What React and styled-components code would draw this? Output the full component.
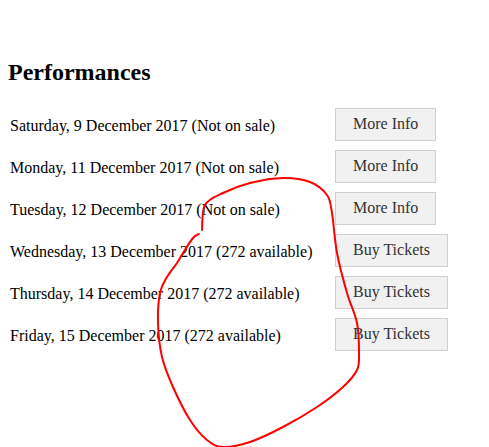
import styled, { createGlobalStyle } from "styled-components";

const GlobalStyle = createGlobalStyle`
  html, body {
    margin: 0;
    padding: 0;
    background: #fff;
  }
  body {
    font-family: "Liberation Serif", "Times New Roman", serif;
    color: #000;
  }
`;

const Page = styled.div`
  position: relative;
  width: 489px;
  height: 447px;
  overflow: hidden;
  padding: 59px 0 0 8px;
  box-sizing: border-box;
`;

const Title = styled.h2`
  margin: 0 0 22px;
  font-size: 24px;
  font-weight: bold;
  line-height: 26.6px;
`;

const List = styled.div`
  display: grid;
  grid-template-columns: 325px auto;
  row-gap: 9px;
  padding-left: 2px;
  justify-content: start;
  align-items: center;
`;

const Label = styled.span`
  font-size: 16px;
  padding-top: 4px;
`;

const Button = styled.button`
  justify-self: start;
  font-family: "Liberation Serif", "Times New Roman", serif;
  font-size: 16px;
  line-height: 18px;
  color: #333;
  background: #f1f1f1;
  border: 1px solid #cfcfcf;
  padding: 6px 17px;
  height: 33px;
  box-sizing: border-box;
  cursor: pointer;
`;

const Scribble = styled.svg`
  position: absolute;
  left: 0;
  top: 0;
  pointer-events: none;
`;

const performances = [
  { date: "Saturday, 9 December 2017", status: "Not on sale", onSale: false },
  { date: "Monday, 11 December 2017", status: "Not on sale", onSale: false },
  { date: "Tuesday, 12 December 2017", status: "Not on sale", onSale: false },
  { date: "Wednesday, 13 December 2017", status: "272 available", onSale: true },
  { date: "Thursday, 14 December 2017", status: "272 available", onSale: true },
  { date: "Friday, 15 December 2017", status: "272 available", onSale: true },
];

const loop = [
  [202, 230], [205, 205], [223, 193], [250, 183], [283, 178], [310, 182],
  [327, 195], [332, 213], [337, 253], [347, 293], [357, 323], [359, 353],
  [357, 370], [343, 387], [317, 407], [283, 427], [250, 442], [223, 447],
  [207, 440], [190, 420], [173, 387], [162, 357], [158, 323], [160, 293],
  [167, 277], [177, 263], [183, 253], [193, 238], [199, 234],
];

// catmull-rom through the points, so the pen line stays smooth
function smoothPath(pts) {
  let d = `M${pts[0][0]},${pts[0][1]}`;
  for (let i = 0; i < pts.length - 1; i++) {
    const p0 = pts[i - 1] || pts[i];
    const p1 = pts[i];
    const p2 = pts[i + 1];
    const p3 = pts[i + 2] || p2;
    const c1 = [p1[0] + (p2[0] - p0[0]) / 6, p1[1] + (p2[1] - p0[1]) / 6];
    const c2 = [p2[0] - (p3[0] - p1[0]) / 6, p2[1] - (p3[1] - p1[1]) / 6];
    d += ` C${c1[0]},${c1[1]} ${c2[0]},${c2[1]} ${p2[0]},${p2[1]}`;
  }
  return d;
}

function App() {
  return (
    <Page>
      <GlobalStyle />
      <Title>Performances</Title>
      <List>
        {performances.map((p) => (
          <>
            <Label key={p.date}>
              {p.date} ({p.status})
            </Label>
            <Button key={p.date + "-btn"}>
              {p.onSale ? "Buy Tickets" : "More Info"}
            </Button>
          </>
        ))}
      </List>
      <Scribble width="489" height="447" viewBox="0 0 489 447">
        <path
          d={smoothPath(loop)}
          fill="none"
          stroke="#f00"
          strokeWidth="2"
          strokeLinecap="round"
          strokeLinejoin="round"
        />
      </Scribble>
    </Page>
  );
}

export default App;
